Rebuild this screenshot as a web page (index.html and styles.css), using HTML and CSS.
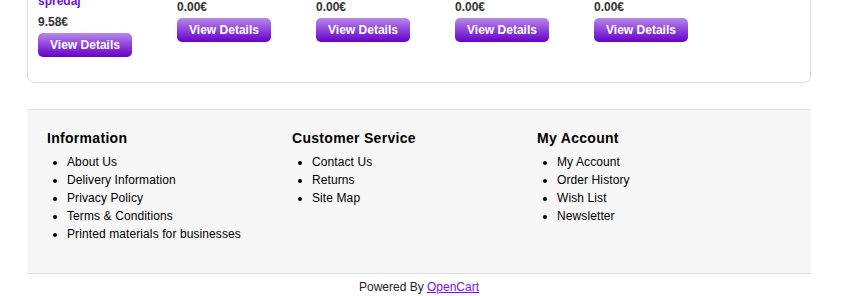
FILE: index.html
```html
<!DOCTYPE html>
<html>
<head>
<meta charset="utf-8">
<link rel="stylesheet" href="styles.css">
</head>
<body>
<div class="page">
  <div class="box">
    <div class="products">
      <div class="product">
        <div class="name"><a href="#">spredaj</a></div>
        <div class="price">9.58€</div>
        <a class="button" href="#">View Details</a>
      </div>
      <div class="product">
        <div class="price">0.00€</div>
        <a class="button" href="#">View Details</a>
      </div>
      <div class="product">
        <div class="price">0.00€</div>
        <a class="button" href="#">View Details</a>
      </div>
      <div class="product">
        <div class="price">0.00€</div>
        <a class="button" href="#">View Details</a>
      </div>
      <div class="product">
        <div class="price">0.00€</div>
        <a class="button" href="#">View Details</a>
      </div>
    </div>
  </div>

  <div class="footer">
    <div class="column">
      <h3>Information</h3>
      <ul>
        <li><a href="#">About Us</a></li>
        <li><a href="#">Delivery Information</a></li>
        <li><a href="#">Privacy Policy</a></li>
        <li><a href="#">Terms &amp; Conditions</a></li>
        <li><a href="#">Printed materials for businesses</a></li>
      </ul>
    </div>
    <div class="column">
      <h3>Customer Service</h3>
      <ul>
        <li><a href="#">Contact Us</a></li>
        <li><a href="#">Returns</a></li>
        <li><a href="#">Site Map</a></li>
      </ul>
    </div>
    <div class="column">
      <h3>My Account</h3>
      <ul>
        <li><a href="#">My Account</a></li>
        <li><a href="#">Order History</a></li>
        <li><a href="#">Wish List</a></li>
        <li><a href="#">Newsletter</a></li>
      </ul>
    </div>
  </div>
  <div class="powered">Powered By <a href="#">OpenCart</a></div>
</div>
</body>
</html>
```
FILE: styles.css
```css
html, body {
  margin: 0;
  padding: 0;
  background: #fff;
}
body {
  font-family: "Liberation Sans", Arial, sans-serif;
  font-size: 12px;
  color: #000;
}
.page {
  width: 784px;
  margin-left: 27px;
}
.box {
  margin-top: -17px;
  border: 1px solid #dcdcdc;
  border-radius: 0 0 7px 7px;
  padding: 10px 10px 25px;
}
.products {
  display: flex;
  align-items: flex-start;
  gap: 9px;
}
.product {
  width: 130px;
  display: flex;
  flex-direction: column;
  align-items: flex-start;
}
.name {
  line-height: 15px;
  font-weight: bold;
}
.name a {
  color: #7310dc;
  text-decoration: none;
}
.price {
  margin-top: 6px;
  line-height: 15px;
  font-weight: bold;
  color: #333;
}
.button {
  margin-top: 3px;
  width: 94px;
  height: 24px;
  display: flex;
  align-items: center;
  justify-content: center;
  border-radius: 5px;
  background: linear-gradient(#b888e8, #8e42dc 50%, #6600c8);
  color: #fff;
  font-weight: bold;
  text-decoration: none;
}
.footer {
  margin-top: 26px;
  background: #f7f7f7;
  border-top: 1px solid #e2e2e2;
  border-bottom: 1px solid #dddddd;
  padding: 20px 20px 30px;
  display: flex;
}
.column {
  width: 245px;
}
.column h3 {
  margin: 0 0 7px;
  font-size: 14px;
  line-height: 16px;
  letter-spacing: 0.3px;
  color: #000;
}
.column ul {
  margin: 0;
  padding-left: 20px;
}
.column li {
  line-height: 18px;
  letter-spacing: 0.1px;
}
.column a {
  color: #000;
  text-decoration: none;
}
.powered {
  margin-top: 6px;
  text-align: center;
  color: #222;
  line-height: 14px;
}
.powered a {
  color: #7a10e8;
  text-decoration: underline;
}
```
